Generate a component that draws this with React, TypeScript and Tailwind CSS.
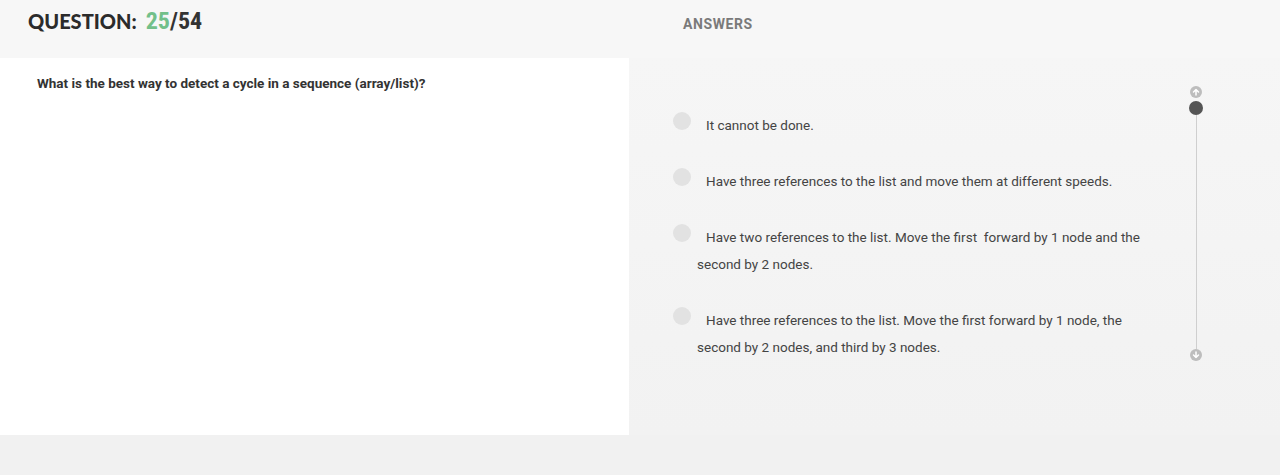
const answers = [
  'It cannot be done.',
  'Have three references to the list and move them at different speeds.',
  'Have two references to the list. Move the first\u00a0 forward by 1 node and the second by 2 nodes.',
  'Have three references to the list. Move the first forward by 1 node, the second by 2 nodes, and third by 3 nodes.',
]

function ScrollArrow({ up }: { up?: boolean }) {
  return (
    <span className="flex h-[12px] w-[12px] items-center justify-center rounded-full bg-[#bdbdbd]">
      <svg width="8" height="8" viewBox="0 0 8 8" aria-hidden="true">
        <path
          d={up ? 'M4 7V1.5M1.5 4L4 1.5L6.5 4' : 'M4 1v5.5M1.5 4L4 6.5L6.5 4'}
          fill="none"
          stroke="#fff"
          strokeWidth="1.5"
          strokeLinecap="round"
          strokeLinejoin="round"
        />
      </svg>
    </span>
  )
}

export default function App() {
  return (
    <div className="flex h-[475px] w-[1280px] flex-col bg-[#f1f1f1] font-['Roboto',sans-serif]">
      <div className="flex h-[58px] shrink-0 bg-[#f7f7f7]">
        <div className="flex w-[629px] items-center pl-[28px] pb-[16px]">
          <span className="font-['Lato',sans-serif] text-[20px] font-black text-[#2b2b2b]">
            QUESTION:
          </span>
          <span className="ml-[9px] font-['Liberation_Sans_Narrow','Roboto_Condensed',sans-serif] text-[24px] font-bold leading-none text-[#333]">
            <span className="text-[#72c08a]">25</span>/54
          </span>
        </div>
        <div className="flex items-center pl-[54px] pb-[10px]">
          <span className="text-[14px] font-bold tracking-[0.6px] text-[#7a7a7a]">ANSWERS</span>
        </div>
      </div>

      <div className="flex h-[377px] shrink-0">
        <div className="w-[629px] bg-white pl-[37px] pt-[16px]">
          <p className="text-[13.5px] font-bold leading-[18px] text-[#333]">
            What is the best way to detect a cycle in a sequence (array/list)?
          </p>
        </div>
        <div className="flex flex-1 bg-gradient-to-b from-[#f6f6f6] to-[#f2f2f2]">
          <ul className="flex flex-col gap-[29px] pl-[44px] pt-[54px]">
            {answers.map((a) => (
              <li key={a} className="flex items-start">
                <span className="h-[18px] w-[18px] shrink-0 rounded-full bg-[#e2e2e2]" />
                <span className="ml-[6px] w-[455px] indent-[9px] text-[13.5px] leading-[27px] text-[#444]">
                  {a}
                </span>
              </li>
            ))}
          </ul>
          <div className="ml-auto mr-[77px] flex flex-col items-center pt-[28px]">
            <ScrollArrow up />
            <span className="mt-[3px] h-[14px] w-[14px] rounded-full bg-[#555]" />
            <span className="h-[234px] w-px bg-[#cfcfcf]" />
            <ScrollArrow />
          </div>
        </div>
      </div>
    </div>
  )
}
